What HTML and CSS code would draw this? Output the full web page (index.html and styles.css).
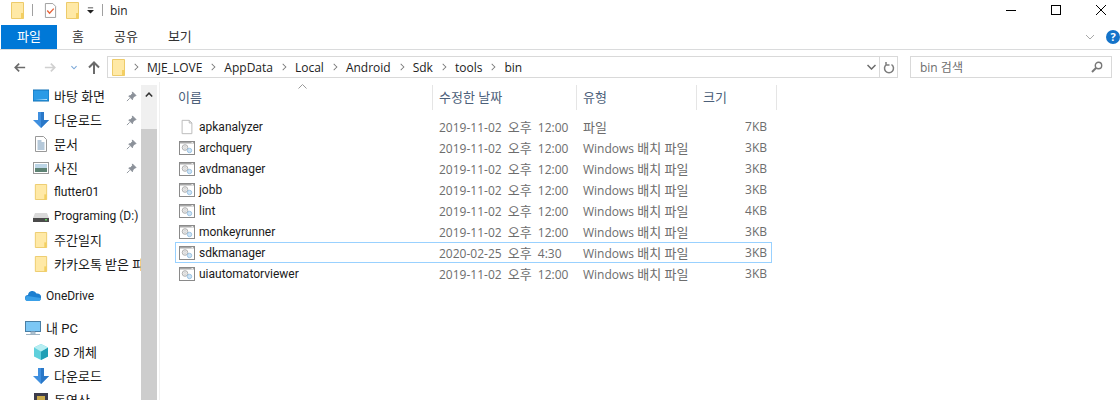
FILE: index.html
```html
<!DOCTYPE html>
<html lang="ko">
<head>
  <meta charset="UTF-8" />
  <title>bin</title>
  <link rel="stylesheet" href="styles.css">
</head>
<body>
  <svg class="defs" width="0" height="0">
    <symbol id="folder" viewBox="0 0 13 17">
      <path d="M.5.5h12v16H.5z" fill="#ffe9a6" stroke="#edcb6a"/>
      <path d="M10 11h2.500v5.500H10z" fill="#f3cf62"/>
    </symbol>
    <symbol id="bat" viewBox="0 0 16 16">
      <rect x="0.500" y="1.500" width="15" height="13" fill="#fff" stroke="#8a8a8a"/>
      <rect x="1" y="2" width="14" height="1.500" fill="#a8a8a8"/>
      <rect x="12.500" y="2.200" width="1.500" height="1" fill="#fff"/>
      <circle cx="6" cy="7.500" r="2.800" fill="#ececec" stroke="#b0b0b0"/>
      <circle cx="6" cy="7.500" r="1" fill="#fff" stroke="#bdbdbd" stroke-width=".6"/>
      <circle cx="10.500" cy="10.500" r="2.200" fill="#cfe4f5" stroke="#9cc4e4"/>
    </symbol>
    <symbol id="file" viewBox="0 0 14 18">
      <path d="M1.500 1.500h8l3 3v12h-11z" fill="#fff" stroke="#b5b5b5"/>
      <path d="M9.500 1.500v3h3" fill="none" stroke="#b5b5b5"/>
    </symbol>
    <symbol id="down" viewBox="0 0 16 16">
      <path d="M5 0h6v8h5l-8 8-8-8h5z" fill="#3f8fdf"/>
      <path d="M8 0h3v8h5l-8 8z" fill="#2a78c8"/>
    </symbol>
    <symbol id="pin" viewBox="0 0 12 12">
      <path d="M7 1l4 4-1.500 .5-2 2-.5 2-4-4 2-.5 2-2zM4 8l-3 3" fill="#8b9199" stroke="#8b9199"/>
    </symbol>
  </svg>

  <header class="titlebar">
    <svg class="ic-folder"><use href="#folder"/></svg>
    <span class="qat-sep"></span>
    <svg class="qat-check" width="13" height="17" viewBox="0 0 14 18">
      <path d="M1.500 1.500h8l3 3v12h-11z" fill="#fff" stroke="#9a9a9a"/>
      <path d="M3.500 9l2.500 3 4.500-5" fill="none" stroke="#e8643a" stroke-width="1.500"/>
    </svg>
    <svg class="ic-folder"><use href="#folder"/></svg>
    <svg class="qat-drop" width="7" height="7" viewBox="0 0 8 7">
      <path d="M1 0h6v1H1zM0 3h8L4 7z" fill="#222"/>
    </svg>
    <span class="qat-sep qat-sep-b"></span>
    <span class="title">bin</span>
    <div class="winbtns">
      <svg width="12" height="12" viewBox="0 0 12 12"><path d="M1 6.500h10" stroke="#000"/></svg>
      <svg width="12" height="12" viewBox="0 0 12 12"><rect x="1.500" y="1.500" width="9" height="9" fill="none" stroke="#000"/></svg>
      <svg width="12" height="12" viewBox="0 0 12 12"><path d="M1 1l10 10M11 1L1 11" stroke="#000"/></svg>
    </div>
  </header>

  <nav class="ribbon">
    <span class="tab tab-file ko">파일</span>
    <span class="tab ko">홈</span>
    <span class="tab ko">공유</span>
    <span class="tab ko">보기</span>
    <div class="ribbon-right">
      <svg width="10" height="6" viewBox="0 0 10 6"><path d="M1 1l4 4 4-4" fill="none" stroke="#a8a8a8"/></svg>
      <span class="help">?</span>
    </div>
  </nav>

  <div class="addressrow">
    <svg class="nav-back" width="12" height="11" viewBox="0 0 14 12"><path d="M13 6H2M6 1.500L1.500 6 6 10.500" fill="none" stroke="#6b6b6b" stroke-width="2"/></svg>
    <svg class="nav-fwd" width="12" height="11" viewBox="0 0 14 12"><path d="M1 6h11M8 1.500L12.500 6 8 10.500" fill="none" stroke="#d0d0d0" stroke-width="2"/></svg>
    <svg class="nav-drop" width="6" height="5" viewBox="0 0 7 5"><path d="M.5 1l3 3 3-3" fill="none" stroke="#7aa7d8" stroke-width="1.300"/></svg>
    <svg class="nav-up" width="12" height="13" viewBox="0 0 12 13"><path d="M6 13V2M1 6.500L6 1.500l5 5" fill="none" stroke="#6b6b6b" stroke-width="2"/></svg>
    <div class="addressbar">
      <svg class="ic-folder"><use href="#folder"/></svg>
      <span class="crumb">MJE_LOVE</span>
      <span class="crumb">AppData</span>
      <span class="crumb">Local</span>
      <span class="crumb">Android</span>
      <span class="crumb">Sdk</span>
      <span class="crumb">tools</span>
      <span class="crumb">bin</span>
      <span class="addr-spacer"></span>
      <svg class="addr-chev" width="9" height="6" viewBox="0 0 9 6"><path d="M.5 1l4 4 4-4" fill="none" stroke="#6b6b6b" stroke-width="1.500"/></svg>
      <span class="refresh">
        <svg width="12" height="13" viewBox="0 0 12 13"><path d="M3.500 3.500a4.500 4.500 0 1 0 5 0M3 1v3h3.500" fill="none" stroke="#7d7d7d" stroke-width="1.500"/></svg>
      </span>
    </div>
    <div class="searchbox">
      <span>bin 검색</span>
      <svg width="12" height="12" viewBox="0 0 12 12"><circle cx="7.500" cy="4.500" r="3.200" fill="none" stroke="#777" stroke-width="1.400"/><path d="M5 7l-4 4" stroke="#777" stroke-width="2"/></svg>
    </div>
  </div>

  <main class="body">
    <aside class="sidebar">
      <ul class="tree">
        <li class="item">
          <svg class="ic" viewBox="0 0 16 16"><rect x="0" y="2" width="16" height="11" fill="#2b9be6" stroke="#1273b8"/><path d="M2 12l12-1v1z" fill="#bfe3fa"/></svg>
          <span class="label ko">바탕 화면</span><svg class="pin"><use href="#pin"/></svg>
        </li>
        <li class="item">
          <svg class="ic"><use href="#down"/></svg>
          <span class="label ko">다운로드</span><svg class="pin"><use href="#pin"/></svg>
        </li>
        <li class="item">
          <svg class="ic" viewBox="0 0 16 16"><path d="M2.500 .5h8l3 3v12h-11z" fill="#fff" stroke="#999"/><path d="M4.500 5h4M4.500 7h7M4.500 9h7M4.500 11h7M4.500 13h7" stroke="#6d93b5"/></svg>
          <span class="label ko">문서</span><svg class="pin"><use href="#pin"/></svg>
        </li>
        <li class="item">
          <svg class="ic" viewBox="0 0 16 16"><rect x=".5" y="2.500" width="15" height="11" fill="#fff" stroke="#999"/><rect x="2" y="4" width="12" height="4" fill="#bcd5e6"/><rect x="2" y="8" width="12" height="4" fill="#5d8273"/></svg>
          <span class="label ko">사진</span><svg class="pin"><use href="#pin"/></svg>
        </li>
        <li class="item">
          <svg class="ic"><use href="#folder"/></svg>
          <span class="label">flutter01</span>
        </li>
        <li class="item">
          <svg class="ic" viewBox="0 0 16 16"><path d="M2 5h12l2 5H0z" fill="#d9d9d9"/><rect x="0" y="10" width="16" height="4" fill="#4a4a4a"/><rect x="12" y="11" width="2" height="1.500" fill="#5fd35f"/></svg>
          <span class="label">Programing (D:)</span>
        </li>
        <li class="item">
          <svg class="ic"><use href="#folder"/></svg>
          <span class="label ko">주간일지</span>
        </li>
        <li class="item">
          <svg class="ic"><use href="#folder"/></svg>
          <span class="label ko">카카오톡 받은 파일</span>
        </li>
        <li class="item item-root item-gap">
          <svg class="ic" viewBox="0 0 16 16"><path d="M3 13a3 3 0 0 1 0-6 4.500 4.500 0 0 1 8.500-1.500A3.800 3.800 0 0 1 16 10a3 3 0 0 1-2 3z" fill="#1c7fd0"/><path d="M3 13a2.500 2.500 0 0 1-.5-5L16 10a3 3 0 0 1-2 3z" fill="#3aa0e8"/></svg>
          <span class="label">OneDrive</span>
        </li>
        <li class="item item-root item-gap">
          <svg class="ic" viewBox="0 0 16 16"><rect x=".5" y="1.500" width="15" height="10" fill="#7cc7f5" stroke="#4a7fa5"/><path d="M6 12h4v2H6zM1 14.500h14" stroke="#9fb3c2" fill="#b8cfe0"/></svg>
          <span class="label ko">내 PC</span>
        </li>
        <li class="item">
          <svg class="ic" viewBox="0 0 16 16"><path d="M8 0l7 3.500v9L8 16l-7-3.500v-9z" fill="#5fd0dc"/><path d="M8 7.500V16l7-3.500v-9z" fill="#1f9fb5"/><path d="M8 0l7 3.500L8 7.500 1 3.500z" fill="#b7eef2"/></svg>
          <span class="label ko">3D 개체</span>
        </li>
        <li class="item">
          <svg class="ic"><use href="#down"/></svg>
          <span class="label ko">다운로드</span>
        </li>
        <li class="item">
          <svg class="ic" viewBox="0 0 16 16"><rect x="1" y="1" width="14" height="14" fill="#3c3c4c"/><rect x="4" y="4" width="8" height="8" fill="#c9a94a"/></svg>
          <span class="label ko">동영상</span>
        </li>
      </ul>
      <div class="scrollbar">
        <span class="scroll-up">
          <svg width="8" height="5" viewBox="0 0 8 5"><path d="M.8 4.500L4 1.200l3.200 3.300" fill="none" stroke="#333" stroke-width="1.500"/></svg>
        </span>
        <span class="scroll-thumb"></span>
      </div>
    </aside>

    <section class="files">
      <div class="colhead">
        <span class="ko">이름<svg class="sort" width="9" height="5" viewBox="0 0 9 5"><path d="M.5 4.500l4-4 4 4" fill="none" stroke="#9a9a9a"/></svg></span>
        <span class="ko">수정한 날짜</span>
        <span class="ko">유형</span>
        <span class="ko">크기</span>
      </div>
      <ul class="rows">
        <li class="row"><span class="fname"><svg class="ficon"><use href="#file"/></svg>apkanalyzer</span><span class="date">2019-11-02 <span class="ko">오후</span> 12:00</span><span class="ko">파일</span><span class="size">7KB</span></li>
        <li class="row"><span class="fname"><svg class="ficon"><use href="#bat"/></svg>archquery</span><span class="date">2019-11-02 <span class="ko">오후</span> 12:00</span><span>Windows <span class="ko">배치 파일</span></span><span class="size">3KB</span></li>
        <li class="row"><span class="fname"><svg class="ficon"><use href="#bat"/></svg>avdmanager</span><span class="date">2019-11-02 <span class="ko">오후</span> 12:00</span><span>Windows <span class="ko">배치 파일</span></span><span class="size">3KB</span></li>
        <li class="row"><span class="fname"><svg class="ficon"><use href="#bat"/></svg>jobb</span><span class="date">2019-11-02 <span class="ko">오후</span> 12:00</span><span>Windows <span class="ko">배치 파일</span></span><span class="size">3KB</span></li>
        <li class="row"><span class="fname"><svg class="ficon"><use href="#bat"/></svg>lint</span><span class="date">2019-11-02 <span class="ko">오후</span> 12:00</span><span>Windows <span class="ko">배치 파일</span></span><span class="size">4KB</span></li>
        <li class="row"><span class="fname"><svg class="ficon"><use href="#bat"/></svg>monkeyrunner</span><span class="date">2019-11-02 <span class="ko">오후</span> 12:00</span><span>Windows <span class="ko">배치 파일</span></span><span class="size">3KB</span></li>
        <li class="row row-active"><span class="fname"><svg class="ficon"><use href="#bat"/></svg>sdkmanager</span><span class="date">2020-02-25 <span class="ko">오후</span> 4:30</span><span>Windows <span class="ko">배치 파일</span></span><span class="size">3KB</span></li>
        <li class="row"><span class="fname"><svg class="ficon"><use href="#bat"/></svg>uiautomatorviewer</span><span class="date">2019-11-02 <span class="ko">오후</span> 12:00</span><span>Windows <span class="ko">배치 파일</span></span><span class="size">3KB</span></li>
      </ul>
    </section>
  </main>
</body>
</html>
```

FILE: styles.css
```css
* { box-sizing: border-box; }
html, body { height: 400px; overflow: hidden; }
body {
  margin: 0;
  background: #fff;
  color: #1a1a1a;
  font-family: "Open Sans", "Noto Sans CJK KR", sans-serif;
  font-size: 12px;
}
ul { list-style: none; margin: 0; padding: 0; }
svg { display: block; flex: none; }
.defs { position: absolute; }
/* hangul in the CJK font runs narrower than the reference */
.ko { font-size: 13px; }

/* title bar */
.titlebar {
  display: flex;
  align-items: center;
  height: 25px;
  padding: 0 0 5px 11px;
}
.ic-folder { width: 13px; height: 17px; }
.qat-sep { width: 1px; height: 12px; margin: 0 11px 0 8px; background: #a0a0a0; }
.qat-check { margin-right: 9px; }
.qat-drop { margin-left: 8px; }
.qat-sep-b { margin: 0 7px 0 8px; }
.title { color: #222; }
.winbtns { display: flex; gap: 33px; margin-left: auto; padding-right: 13px; }

/* ribbon */
.ribbon {
  display: flex;
  align-items: center;
  height: 25px;
  padding-left: 1px;
  border-bottom: 1px solid #dadbdc;
}
.tab { height: 24px; padding: 0 15px; color: #333; line-height: 22px; }
.tab-file { width: 56px; padding: 0; background: #0078d7; color: #fff; text-align: center; }
.ribbon-right { display: flex; align-items: center; gap: 11px; margin-left: auto; }
.help {
  width: 14px;
  height: 14px;
  border-radius: 50%;
  background: #1473c9;
  color: #fff;
  font-size: 11px;
  font-weight: 700;
  line-height: 14px;
  text-align: center;
}

/* address row */
.addressrow {
  display: flex;
  align-items: center;
  height: 32px;
  padding: 6px 0 4px 14px;
}
.nav-back { margin-right: 18px; }
.nav-fwd { margin-right: 15px; }
.nav-drop { margin-right: 11px; }
.nav-up { margin-right: 7px; }
.addressbar {
  display: flex;
  align-items: center;
  width: 791px;
  height: 22px;
  padding-left: 4px;
  border: 1px solid #d9d9d9;
}
.crumb { display: flex; align-items: center; color: #222; margin-left: 7px; }
.crumb::before {
  content: "";
  width: 5px;
  height: 5px;
  margin-right: 9px;
  border-top: 1.500px solid #777;
  border-right: 1.500px solid #777;
  transform: rotate(45deg) scale(.8);
}
.addr-spacer { flex: 1; }
.addr-chev { margin-right: 3px; }
.refresh {
  display: flex;
  align-items: center;
  justify-content: center;
  width: 18px;
  height: 20px;
  border-left: 1px solid #d9d9d9;
}
.searchbox {
  display: flex;
  align-items: center;
  justify-content: space-between;
  width: 202px;
  height: 22px;
  margin-left: 12px;
  padding: 0 8px 0 9px;
  border: 1px solid #d9d9d9;
  color: #6d6d6d;
}

/* nav pane */
.body { display: flex; height: 318px; }
.sidebar { display: flex; width: 160px; flex: none; border-right: 1px solid #f0f0f0; }
.tree { width: 141px; flex: none; padding-top: 2px; overflow: hidden; }
.item {
  position: relative;
  display: flex;
  align-items: center;
  height: 24px;
  padding-left: 33px;
  white-space: nowrap;
}
.item-root { padding-left: 25px; }
.item-gap { margin-top: 8px; }
.ic { width: 16px; height: 16px; margin-right: 5px; }
.label { color: #1a1a1a; font-family: Roboto, "Noto Sans CJK KR", sans-serif; }
.label.ko { padding-bottom: 2px; }
.pin { position: absolute; left: 126px; top: 7px; width: 11px; height: 11px; }
.scrollbar { display: flex; flex-direction: column; width: 16px; margin-top: 3px; background: #cdcdcd; }
.scroll-up {
  display: flex;
  align-items: center;
  justify-content: center;
  height: 18px;
  background: #f0f0f0;
}
.scroll-thumb { height: 26px; background: #f0f0f0; }

/* file list */
.files { flex: 1; padding-left: 12px; }
.colhead { display: grid; grid-template-columns: 261px 144px 120px 80px; height: 25px; margin-top: 3px; color: #4c607a; }
.colhead span {
  position: relative;
  height: 25px;
  padding-left: 6px;
  line-height: 25px;
  border-right: 1px solid #e5e5e5;
}
.sort { position: absolute; left: 126px; top: -1px; }
.rows { padding-top: 6px; }
.row {
  display: grid;
  grid-template-columns: 260px 144px 120px 71px;
  width: 597px;
  height: 21px;
  margin-left: 3px;
  align-items: center;
  color: #6d6d6d;
  border: 1px solid transparent;
}
.row > span { padding-left: 3px; white-space: nowrap; }
.date { word-spacing: 3px; }
.fname { display: flex; align-items: center; color: #1a1a1a; font-family: Roboto, sans-serif; }
.ficon { width: 16px; height: 16px; margin-right: 4px; }
.row > .size { padding-right: 4px; text-align: right; }
.row-active { border-color: #99d1ff; }
```
